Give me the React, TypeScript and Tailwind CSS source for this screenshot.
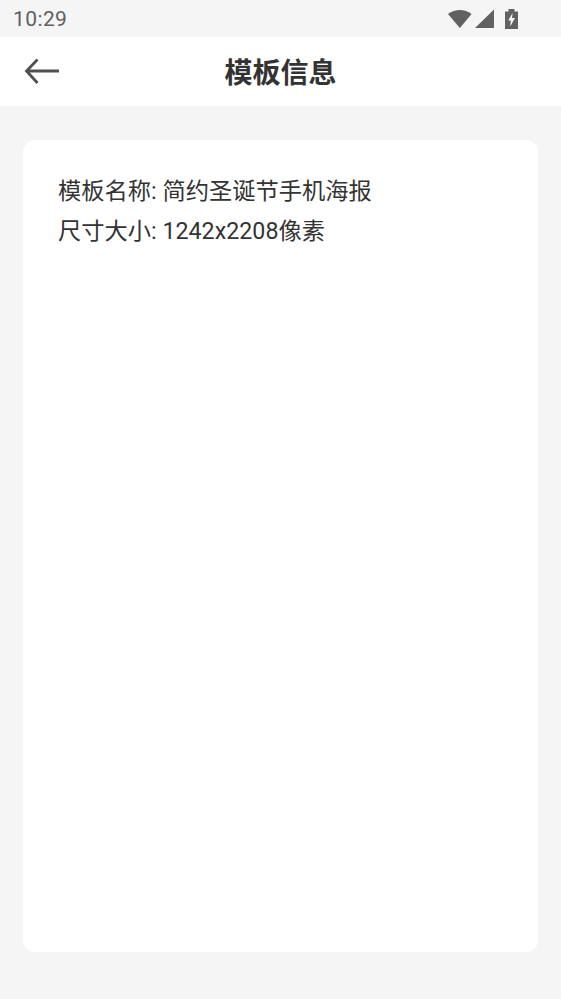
export default function App() {
  const font = { fontFamily: 'Roboto, "Noto Sans CJK SC", sans-serif' };
  return (
    <div style={font} className="flex h-[999px] w-[561px] flex-col bg-[#f5f5f5]">
      <div className="flex h-[37px] shrink-0 items-center justify-between pl-[13px] pr-[43px]">
        <span className="pt-[2px] text-[21px] leading-none tracking-[0.4px] text-[#606060]">10:29</span>
        <div className="flex items-center gap-[3px]">
          <svg width="24" height="20" viewBox="0 0 24 20">
            <path d="M0 5 C3.5 2.5 7.5 1 11.8 1 C16 1 20 2.5 23.6 5 L11.8 19 Z" fill="#616161" />
          </svg>
          <svg width="19" height="20" viewBox="0 0 19 20">
            <path d="M0 19 L19 0.5 L19 19 Z" fill="#616161" />
          </svg>
          <svg width="13" height="20" viewBox="0 0 13 20" className="ml-[8px]">
            <path d="M3.5 0 H9.5 V2.5 H13 V20 H0 V2.5 H3.5 Z" fill="#616161" />
            <path d="M7.6 4 L3.2 11.5 H5.8 L5.2 17.5 L10 9 H7 Z" fill="#f5f5f5" />
          </svg>
        </div>
      </div>
      <header className="relative flex h-[69px] shrink-0 items-center justify-center bg-white pt-[5px]">
        <svg width="36" height="28" viewBox="0 0 36 28" fill="none" className="absolute left-[24px] top-[20px]">
          <path d="M35 14 H2.5 M13.5 2.5 L2.5 14 L13.5 26" stroke="#505050" strokeWidth="2.8" />
        </svg>
        <h1 className="text-[28px] font-bold leading-none text-[#333333]">模板信息</h1>
      </header>
      <main className="flex min-h-0 flex-1 flex-col px-[23px] pb-[47px] pt-[34px]">
        <div className="flex-1 rounded-[12px] bg-white px-[35px] pt-[31px] text-[23.25px] leading-[40px] text-[#333333]">
          <p>模板名称: 简约圣诞节手机海报</p>
          <p>尺寸大小: 1242x2208像素</p>
        </div>
      </main>
    </div>
  );
}
